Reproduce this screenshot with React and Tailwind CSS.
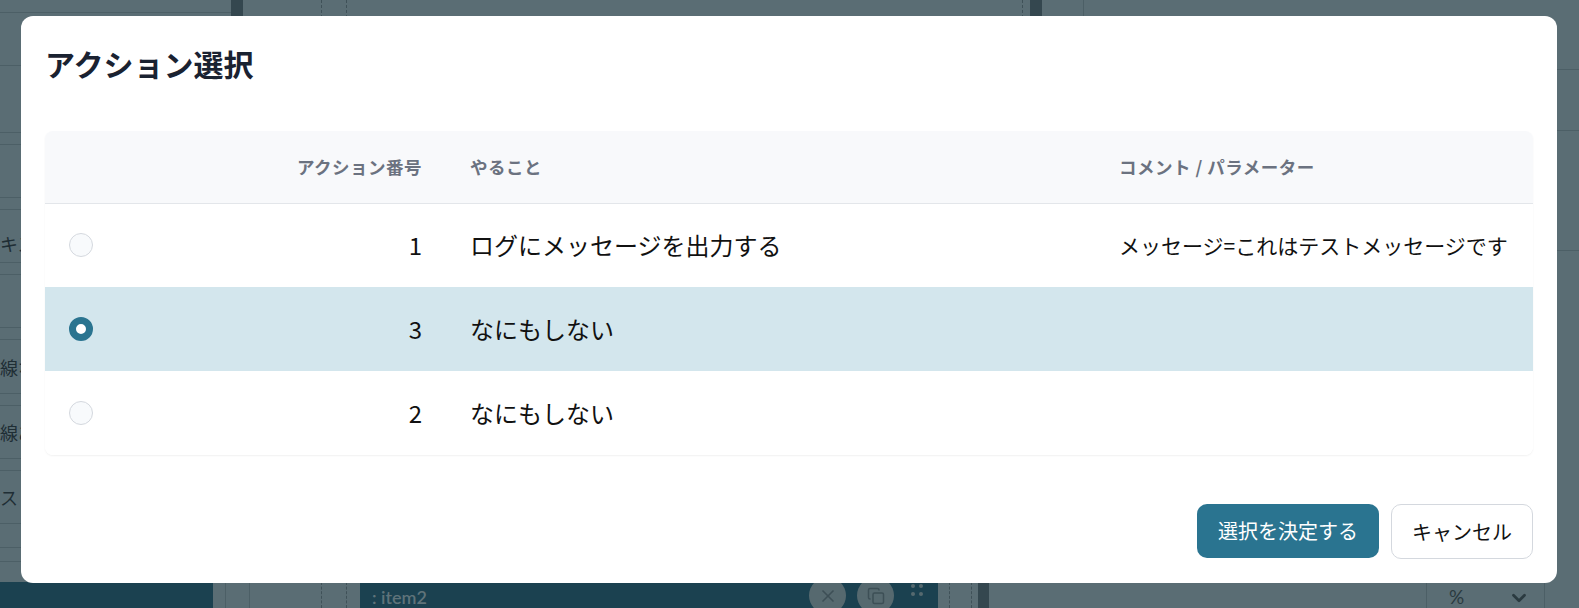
import { X, Copy, ChevronDown } from "lucide-react";

const rows = [
  { no: 1, task: "ログにメッセージを出力する", comment: "メッセージ=これはテストメッセージです", checked: false },
  { no: 3, task: "なにもしない", comment: "", checked: true },
  { no: 2, task: "なにもしない", comment: "", checked: false },
];

const Strip = () => <div className="h-[13px] border-y border-[#4c5f66]" />;

// dimmed app behind the dialog
const Backdrop = () => (
  <div className="flex h-full w-full flex-col">
    <div className="flex h-[582px]">
      {/* left panel */}
      <div className="flex w-[231px] shrink-0 flex-col">
        <div className="h-[13px] border-b border-[#4c5f66]" />
        <div className="h-[53px] border-b border-[#4c5f66]" />
        <div className="h-[66px]" />
        <Strip />
        <div className="h-[52px]" />
        <Strip />
        <div className="flex h-[52px] items-center pt-[14px] text-[18px] text-[#1f2e35]">キスト</div>
        <Strip />
        <div className="h-[52px]" />
        <Strip />
        <div className="flex h-[53px] items-center pt-[2px] text-[18px] text-[#1f2e35]">線なし</div>
        <Strip />
        <div className="flex h-[52px] items-center text-[18px] text-[#1f2e35]">線あり</div>
        <Strip />
        <div className="flex h-[52px] items-center text-[18px] text-[#1f2e35]">スト</div>
        <div className="h-[25px] border-y border-[#4c5f66]" />
        <div className="h-[14px] border-b border-[#4c5f66]" />
      </div>
      {/* dark splitter */}
      <div className="w-[12px] shrink-0 bg-[#34474f]" />
      {/* canvas */}
      <div className="w-[79px] shrink-0 border-r border-dashed border-[#3f5158]" />
      <div className="w-[25px] shrink-0 border-r border-dashed border-[#3f5158]" />
      <div className="w-[676px] shrink-0 border-r border-dashed border-[#3f5158]" />
      <div className="w-[7px] shrink-0" />
      <div className="w-[12px] shrink-0 bg-[#34474f]" />
      <div className="w-[42px] shrink-0 border-r border-[#4c5f66]" />
      {/* right panel */}
      <div className="flex flex-1 flex-col">
        <div className="h-[70px] border-b border-[#4c5f66]" />
        <div className="h-[61px] border-b border-[#4c5f66]" />
        <div className="h-[120px] border-b border-[#4c5f66]" />
      </div>
    </div>

    {/* bottom strip below the dialog */}
    <div className="flex h-[26px]">
      <div className="w-[213px] shrink-0 bg-[#1b4150]" />
      <div className="w-[13px] shrink-0 border-r border-[#4c5f66]" />
      <div className="w-[24px] shrink-0 border-r border-[#4c5f66]" />
      <div className="w-[72px] shrink-0 border-r border-dashed border-[#3f5158]" />
      <div className="w-[25px] shrink-0 border-r border-dashed border-[#3f5158]" />
      <div className="w-[13px] shrink-0" />
      <div className="flex w-[578px] shrink-0 bg-[#1b4150] pl-3">
        <span className="pt-[3px] font-['Lato',sans-serif] text-[18px] font-semibold leading-[24px] text-[#5f737a]">: item2</span>
        <div className="ml-auto mr-[15px] flex items-start gap-[11px]">
          <span className="-mt-[5px] flex h-[37px] w-[37px] items-center justify-center rounded-full bg-[#56696f] text-[#3d4f56]">
            <X size={20} />
          </span>
          <span className="-mt-[5px] flex h-[37px] w-[37px] items-center justify-center rounded-full bg-[#56696f] text-[#3d4f56]">
            <Copy size={18} />
          </span>
          <span className="ml-[6px] grid grid-cols-2 gap-[4px] pt-[2px]">
            <i className="h-[4px] w-[4px] rounded-full bg-[#56696f]" />
            <i className="h-[4px] w-[4px] rounded-full bg-[#56696f]" />
            <i className="h-[4px] w-[4px] rounded-full bg-[#56696f]" />
            <i className="h-[4px] w-[4px] rounded-full bg-[#56696f]" />
          </span>
        </div>
      </div>
      <div className="w-[12px] shrink-0 border-r border-dashed border-[#3f5158]" />
      <div className="w-[22px] shrink-0 border-r border-dashed border-[#3f5158]" />
      <div className="w-[6px] shrink-0" />
      <div className="w-[11px] shrink-0 bg-[#34474f]" />
      <div className="w-[438px] shrink-0 border-r border-[#4c5f66]" />
      <div className="flex w-[118px] shrink-0 items-start border-r border-[#4c5f66] pl-[22px] pr-[14px] pt-[5px] text-[#2a3a40]">
        <span className="font-['Lato',sans-serif] text-[19px] leading-none">%</span>
        <ChevronDown size={22} strokeWidth={3} className="ml-auto" />
      </div>
    </div>
  </div>
);

const Radio = ({ checked }) =>
  checked ? (
    <span className="block h-6 w-6 rounded-full border-[7px] border-[#2a7490] bg-white" />
  ) : (
    <span className="block h-6 w-6 rounded-full border border-[#d4d8de] bg-[#f8fafc]" />
  );

export default function App() {
  return (
    <div className="relative h-[608px] w-full overflow-hidden bg-[#5a6d74] font-['Noto_Sans_CJK_JP','Noto_Sans',sans-serif]">
      <Backdrop />

      {/* dialog */}
      <div className="absolute left-[21px] top-[16px] w-[1536px] rounded-xl bg-white px-6 pb-6 pt-[29px]">
        <h2 className="text-[30px] font-bold leading-[36px] text-[#1a2231]">アクション選択</h2>

        <div className="mt-[50px] overflow-hidden rounded-lg shadow-[0_1px_2px_rgba(0,0,0,0.06)]">
          <table className="w-full table-fixed border-collapse">
            <colgroup>
              <col className="w-[72px]" />
              <col className="w-[329px]" />
              <col className="w-[649px]" />
              <col className="w-[438px]" />
            </colgroup>
            <thead>
              <tr className="h-[72px] border-b border-[#e3e6ea] bg-[#f8f9fb] text-[17.5px] font-semibold tracking-[0.5px] text-[#6b7280]">
                <th />
                <th className="px-6 text-right font-semibold">アクション番号</th>
                <th className="px-6 text-left font-semibold">やること</th>
                <th className="px-6 text-left font-semibold">コメント / パラメーター</th>
              </tr>
            </thead>
            <tbody>
              {rows.map((r, i) => (
                <tr key={i} className={`h-[84px] ${r.checked ? "bg-[#d3e6ed]" : "bg-white"}`}>
                  <td className="px-6 align-middle">
                    <Radio checked={r.checked} />
                  </td>
                  <td className="px-6 text-right text-[24px] text-[#111]">{r.no}</td>
                  <td className="px-6 text-[24px] text-[#111]">{r.task}</td>
                  <td className="px-6 text-[21px] text-[#111]">{r.comment}</td>
                </tr>
              ))}
            </tbody>
          </table>
        </div>

        <div className="mt-[49px] flex justify-end gap-3">
          <button className="h-[54px] rounded-[10px] bg-[#2a7490] px-[21px] text-[20px] text-white">
            選択を決定する
          </button>
          <button className="h-[55px] rounded-[10px] border border-[#d4d8de] bg-white px-[20px] text-[20px] text-[#111]">
            キャンセル
          </button>
        </div>
      </div>
    </div>
  );
}
